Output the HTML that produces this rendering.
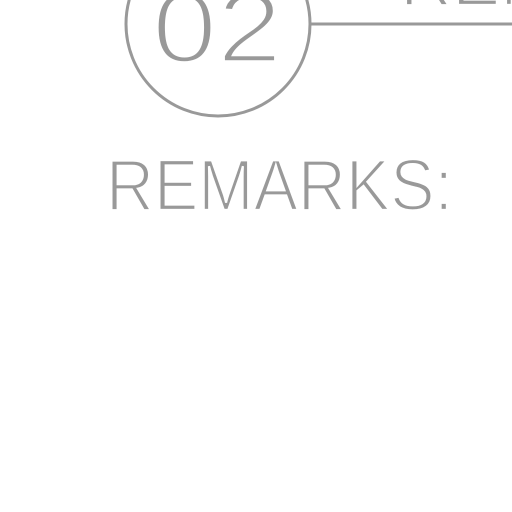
<!DOCTYPE html>
<html><head><style>
html,body{margin:0;padding:0;background:#fff;width:512px;height:512px;overflow:hidden}
</style></head><body>
<svg width="512" height="512" viewBox="0 0 512 512" xmlns="http://www.w3.org/2000/svg">
<circle cx="218" cy="24" r="92" fill="none" stroke="#999" stroke-width="3"/>
<line x1="310" y1="24" x2="512" y2="24" stroke="#999" stroke-width="3"/>
<text x="152" y="62" font-family="Liberation Sans, sans-serif" font-size="100" fill="#999" stroke="#fff" stroke-width="3.5" textLength="130" lengthAdjust="spacingAndGlyphs">02</text>
<text x="400" y="5" font-family="Liberation Sans, sans-serif" font-size="72" fill="#999" stroke="#fff" stroke-width="2.3">REMARKS:</text>
<text x="106" y="210" font-family="Liberation Sans, sans-serif" font-size="72" fill="#999" stroke="#fff" stroke-width="2.3" textLength="347" lengthAdjust="spacingAndGlyphs">REMARKS:</text>
</svg>
</body></html>
